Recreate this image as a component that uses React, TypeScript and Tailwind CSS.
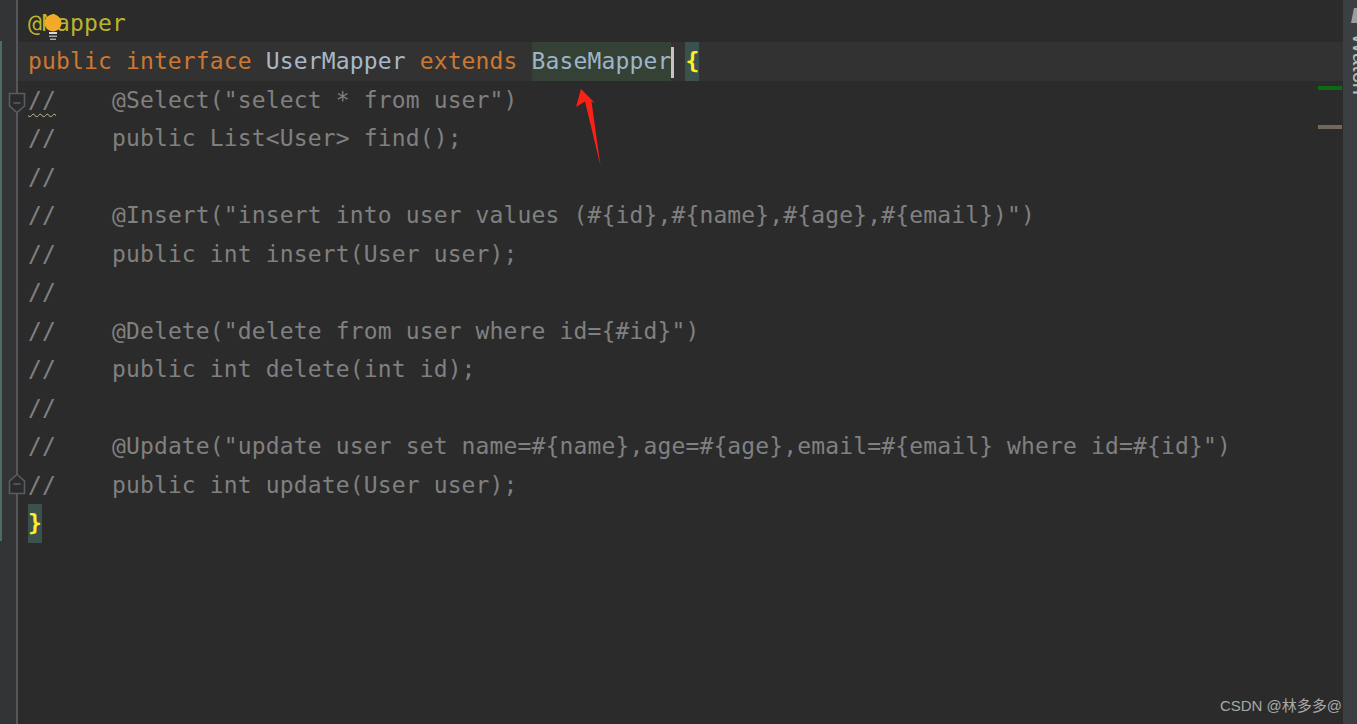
import React from 'react';

const comments = [
  '    @Select("select * from user")',
  '    public List<User> find();',
  '',
  '    @Insert("insert into user values (#{id},#{name},#{age},#{email})")',
  '    public int insert(User user);',
  '',
  '    @Delete("delete from user where id={#id}")',
  '    public int delete(int id);',
  '',
  '    @Update("update user set name=#{name},age=#{age},email=#{email} where id=#{id}")',
  '    public int update(User user);',
];

const Line: React.FC<{ children: React.ReactNode; active?: boolean }> = ({ children, active }) => (
  <div className={`h-[38.5px] leading-[38.5px] pl-[10px] whitespace-pre ${active ? 'bg-[#323232]' : ''}`}>
    {children}
  </div>
);

const FoldMark: React.FC<{ up?: boolean; className?: string }> = ({ up, className }) => (
  <svg className={`shrink-0 ${className ?? ''}`} width="18" height="22" viewBox="0 0 18 22" fill="none" stroke="#5a5d5f" strokeWidth="1.6">
    {up ? <path d="M1.5 20.5V8L9 1.5 16.5 8v12.5z" fill="#2b2b2b" /> : <path d="M1.5 1.5h15V14L9 20.5 1.5 14z" fill="#2b2b2b" />}
    <path d="M5.5 11h7" />
  </svg>
);

export default function App() {
  return (
    <div className="relative flex h-[724px] w-[1357px] overflow-hidden bg-[#2b2b2b] font-['DejaVu_Sans_Mono',monospace] text-[23px] tracking-[0.14px]">
      {/* Gutter */}
      <div className="flex w-[18px] shrink-0 border-r-2 border-[#55585a] bg-[#313335]">
        <div className="w-[2px] shrink-0 pt-[41px]">
          <div className="h-[500px] bg-[#4d6b60]" />
        </div>
        <div className="flex w-[14px] flex-col pl-[6px] pt-[92px]">
          <FoldMark />
          <FoldMark up className="mt-[359px]" />
        </div>
      </div>

      {/* Code */}
      <div className="flex-1 pt-[3.5px] text-[#808080]">
        <Line><span className="text-[#bbb529]">@Mapper</span></Line>
        <Line active>
          <span className="text-[#cc7832]">public interface </span>
          <span className="text-[#a9b7c6]">UserMapper </span>
          <span className="text-[#cc7832]">extends </span>
          <span className="inline-block h-[38.5px] bg-[#344134] text-[#9fb4c9]">BaseMapper</span>
          <span className="-mr-[3px] inline-block h-[31px] w-[3px] bg-[#c4c4c4] align-middle" />
          <span className="text-[#a9b7c6]"> </span>
          <span className="inline-block h-[38.5px] bg-[#3b514d] font-bold text-[#ffef28]">{'{'}</span>
        </Line>
        {comments.map((c, i) => (
          <Line key={i}>
            <span className={i === 0 ? 'underline decoration-[#c4bb90] decoration-wavy decoration-1 underline-offset-[5px]' : ''}>//</span>
            {c}
          </Line>
        ))}
        <Line><span className="inline-block h-[38.5px] bg-[#3b514d] font-bold text-[#ffef28]">{'}'}</span></Line>
      </div>

      {/* Error stripe */}
      <div className="-ml-[25px] flex w-[25px] shrink-0 flex-col pr-px pt-[86px]">
        <div className="h-[4px] bg-[#0b6b12]" />
        <div className="mt-[35px] h-[4px] bg-[#72695a]" />
      </div>

      {/* Right tool strip */}
      <div className="flex w-[14px] shrink-0 flex-col overflow-hidden bg-[#3c3f41] pl-[8px] pt-[8px]">
        <svg className="shrink-0" width="6" height="16" viewBox="0 0 6 16">
          <path d="M0 15L3 0h3v15z" fill="#9c9c9c" />
        </svg>
        <span className="-ml-px mt-[9px] block w-[20px] shrink-0 self-start font-['Liberation_Sans',sans-serif] text-[22px] leading-[20px] text-[#bbbbbb] [writing-mode:vertical-rl]">
          Watch
        </span>
      </div>

      {/* Intention bulb */}
      <svg className="absolute left-[43px] top-[13px]" width="20" height="28" viewBox="0 0 20 28">
        <circle cx="10" cy="10" r="8.5" fill="#f4a928" />
        <path d="M6 19h8v2H6z" fill="#d9d9d9" />
        <path d="M6 22.5h8v1.5H6zM7 25.5h6V27H7z" fill="#a8a8a8" />
      </svg>

      {/* Annotation arrow */}
      <svg className="absolute left-[570px] top-[85px]" width="36" height="85" viewBox="0 0 36 85">
        <path d="M11 4L6 22 15 16.5 30.5 81 21.5 16.5 25 18z" fill="#fb2116" />
      </svg>

      {/* Watermark */}
      <div className="absolute right-[15px] top-[696px] font-['Liberation_Sans','Noto_Sans_CJK_SC',sans-serif] text-[15px] leading-[20px] tracking-normal text-[#a8a8a8]">
        CSDN @林多多@
      </div>
    </div>
  );
}
